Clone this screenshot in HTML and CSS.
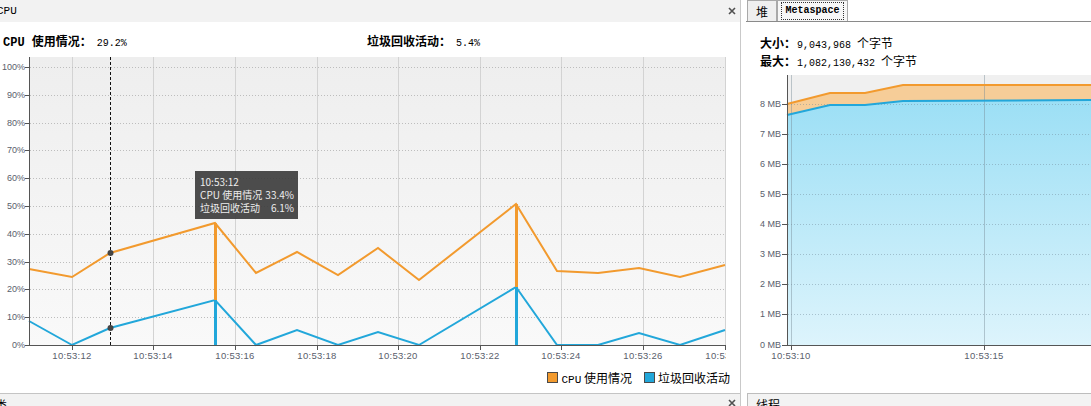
FILE: index.html
```html
<!DOCTYPE html>
<html>
<head>
<meta charset="utf-8">
<title>VisualVM</title>
<link rel="stylesheet" href="styles.css">
</head>
<body>
<div class="app">
  <section class="panel-left">
    <div class="phead">
      <span class="ptitle">CPU</span>
      <svg class="close" width="8" height="8" viewBox="0 0 8 8"><path d="M1 1L7 7M7 1L1 7" stroke="#505050" stroke-width="1.6"/></svg>
    </div>
    <div class="pbody-left">
      <div class="stats">
        <div class="stat stat-cpu"><span class="lbl">CPU 使用情况：</span><span class="val">29.2%</span></div>
        <div class="stat"><span class="lbl">垃圾回收活动：</span><span class="val">5.4%</span></div>
      </div>
      <div class="chart-left">
        <svg width="741" height="310" viewBox="0 0 741 310">
          <defs>
            <linearGradient id="gl" x1="0" y1="0" x2="0" y2="1">
              <stop offset="0" stop-color="#eeeeee"/>
              <stop offset="1" stop-color="#f9f9f9"/>
            </linearGradient>
            <clipPath id="clipL"><rect x="0" y="0" width="726" height="400"/></clipPath>
          </defs>
          <g transform="translate(0,-57)">
            <rect x="29" y="57" width="696" height="288" fill="url(#gl)"/>
            <g stroke="#d3d3d3" stroke-width="1">
              <path d="M72.5 57V345M153.5 57V345M235.5 57V345M317.5 57V345M398.5 57V345M480.5 57V345M561.5 57V345M643.5 57V345M725.5 57V345"/>
            </g>
            <g stroke="#bdbdbd" stroke-width="1" stroke-dasharray="1 2">
              <path d="M30 317.5H725M30 289.5H725M30 262.5H725M30 234.5H725M30 206.5H725M30 178.5H725M30 150.5H725M30 123.5H725M30 95.5H725M30 67.5H725"/>
            </g>
            <path d="M110.5 57V345" stroke="#111" stroke-width="1" stroke-dasharray="3 2"/>
            <g fill="none" stroke-width="2" stroke-linejoin="miter">
              <polyline stroke="#f29a2e" points="29,269 72,277 110,253 215,223 256,273 297,252 338,275 378,248 419,280 516,204 557,271 598,273 639,268 680,277 725,265"/>
              <polyline stroke="#22a7da" points="29,321 72,345 110,328 215,300 256,345 297,330 338,345 378,332 419,345 516,287 557,345 598,345 639,333 680,345 725,330"/>
            </g>
            <path d="M215.5 223V300M516.5 204V287" stroke="#f29a2e" stroke-width="3"/>
            <path d="M215.5 300V345M516.5 287V345" stroke="#22a7da" stroke-width="3"/>
            <circle cx="110.5" cy="253" r="3" fill="#444"/>
            <circle cx="110.5" cy="328" r="3" fill="#444"/>
            <g stroke="#555" stroke-width="1">
              <path d="M29.5 57V346M29 345.5H726"/>
              <path d="M25 345.5H29M25 317.5H29M25 289.5H29M25 262.5H29M25 234.5H29M25 206.5H29M25 178.5H29M25 150.5H29M25 123.5H29M25 95.5H29M25 67.5H29"/>
              <path d="M72.5 346V350M153.5 346V350M235.5 346V350M317.5 346V350M398.5 346V350M480.5 346V350M561.5 346V350M643.5 346V350M725.5 346V350"/>
            </g>
            <g class="ylab" text-anchor="end">
              <text x="25" y="348">0%</text>
              <text x="25" y="320">10%</text>
              <text x="25" y="292">20%</text>
              <text x="25" y="265">30%</text>
              <text x="25" y="237">40%</text>
              <text x="25" y="209">50%</text>
              <text x="25" y="181">60%</text>
              <text x="25" y="153">70%</text>
              <text x="25" y="126">80%</text>
              <text x="25" y="98">90%</text>
              <text x="25" y="70">100%</text>
            </g>
            <g class="xlab" text-anchor="middle" clip-path="url(#clipL)">
              <text x="72" y="359">10:53:12</text>
              <text x="153" y="359">10:53:14</text>
              <text x="235" y="359">10:53:16</text>
              <text x="317" y="359">10:53:18</text>
              <text x="398" y="359">10:53:20</text>
              <text x="480" y="359">10:53:22</text>
              <text x="561" y="359">10:53:24</text>
              <text x="643" y="359">10:53:26</text>
              <text x="725" y="359">10:53:28</text>
            </g>
          </g>
        </svg>
        <div class="tooltip">
          <div class="tt-time">10:53:12</div>
          <div class="tt-row"><span>CPU 使用情况</span><span>33.4%</span></div>
          <div class="tt-row"><span>垃圾回收活动</span><span>6.1%</span></div>
        </div>
      </div>
      <div class="legend">
        <span class="sw sw-cpu"></span><span class="ltext"><span class="mono">CPU</span> 使用情况</span>
        <span class="sw sw-gc"></span><span class="ltext">垃圾回收活动</span>
      </div>
    </div>
    <div class="phead phead-bottom">
      <span class="ptitle-cn">类</span>
      <svg class="close" width="8" height="8" viewBox="0 0 8 8"><path d="M1 1L7 7M7 1L1 7" stroke="#505050" stroke-width="1.6"/></svg>
    </div>
  </section>
  <div class="split"></div>
  <section class="panel-right">
    <div class="tabs">
      <div class="tab">堆</div>
      <div class="tab tab-active"><span class="tab-focus">Metaspace</span></div>
    </div>
    <div class="pbody-right">
      <div class="info">
        <div class="irow"><span class="lbl">大小：</span><span class="num">9,043,968</span><span class="unit">个字节</span></div>
        <div class="irow"><span class="lbl">最大：</span><span class="num">1,082,130,432</span><span class="unit">个字节</span></div>
      </div>
      <svg class="chart-right" width="345" height="297" viewBox="0 0 345 297">
        <defs>
          <linearGradient id="gb" x1="0" y1="0" x2="0" y2="1">
            <stop offset="0" stop-color="#9cdff5"/>
            <stop offset="1" stop-color="#ddf4fc"/>
          </linearGradient>
        </defs>
        <g transform="translate(-746,-70)">
          <rect x="787" y="75" width="304" height="270" fill="#f0f0f0"/>
          <polygon fill="#f6cd98" points="787,104 830,93 865,93 903,85 1091,85 1091,100 903,101 865,105 830,105 787,115"/>
          <polygon fill="url(#gb)" points="787,115 830,105 865,105 903,101 1091,100 1091,345 787,345"/>
          <g stroke="rgba(110,135,150,0.45)" stroke-width="1" stroke-dasharray="1 2">
            <path d="M788 314.5H1091M788 284.5H1091M788 254.5H1091M788 224.5H1091M788 194.5H1091M788 164.5H1091M788 134.5H1091M788 104.5H1091"/>
          </g>
          <path d="M791.5 75V345M984.5 75V345" stroke="rgba(120,140,150,0.45)" stroke-width="1"/>
          <polyline fill="none" stroke="#f29a2e" stroke-width="2" points="787,104 830,93 865,93 903,85 1091,85"/>
          <polyline fill="none" stroke="#22a7da" stroke-width="2" points="787,115 830,105 865,105 903,101 1091,100"/>
          <g stroke="#555" stroke-width="1">
            <path d="M787.5 75V346M787 345.5H1091"/>
            <path d="M782 345.5H787M782 314.5H787M782 284.5H787M782 254.5H787M782 224.5H787M782 194.5H787M782 164.5H787M782 134.5H787M782 104.5H787"/>
            <path d="M791.5 346V350M984.5 346V350"/>
          </g>
          <g class="ylab" text-anchor="end">
            <text x="781" y="348">0 MB</text>
            <text x="781" y="317">1 MB</text>
            <text x="781" y="287">2 MB</text>
            <text x="781" y="257">3 MB</text>
            <text x="781" y="227">4 MB</text>
            <text x="781" y="197">5 MB</text>
            <text x="781" y="167">6 MB</text>
            <text x="781" y="137">7 MB</text>
            <text x="781" y="107">8 MB</text>
          </g>
          <g class="xlab" text-anchor="middle">
            <text x="791" y="359">10:53:10</text>
            <text x="984" y="359">10:53:15</text>
          </g>
        </g>
      </svg>
    </div>
    <div class="bottom-right">
      <div class="brbox"><span>线程</span></div>
    </div>
  </section>
</div>
</body>
</html>
```

FILE: styles.css
```css
* {
  box-sizing: border-box;
  margin: 0;
  padding: 0;
}

html, body {
  width: 1091px;
  height: 406px;
  overflow: hidden;
  background: #ffffff;
}

body {
  font-family: "Noto Sans CJK SC", "Liberation Sans", sans-serif;
  font-size: 12px;
  color: #000;
}

.app {
  display: flex;
  width: 1091px;
  height: 406px;
}

/* ---------- left panel ---------- */
.panel-left {
  width: 741px;
  flex: none;
  border-right: 1px solid #c9c9c9;
  display: flex;
  flex-direction: column;
  overflow: hidden;
}

.phead {
  height: 22px;
  flex: none;
  background: #f2f2f2;
  display: flex;
  align-items: center;
  justify-content: space-between;
  padding-right: 4px;
}

.ptitle {
  font-family: "Liberation Mono", monospace;
  font-size: 11px;
  margin-left: -3px;
  line-height: 14px;
}

.close {
  display: block;
}

.pbody-left {
  height: 371px;
  flex: none;
  display: flex;
  flex-direction: column;
}

.stats {
  height: 35px;
  flex: none;
  padding-top: 7px;
  padding-left: 3px;
  display: flex;
  line-height: 28px;
}

.stat {
  display: flex;
  align-items: baseline;
}

.stat-cpu {
  width: 364px;
}

.lbl {
  font-family: "Liberation Mono", "Noto Sans CJK SC", monospace;
  font-weight: bold;
  font-size: 12px;
}

.val {
  font-family: "Liberation Mono", monospace;
  font-size: 10px;
  margin-left: 5px;
}

.chart-left {
  position: relative;
  height: 310px;
  flex: none;
}

.chart-left svg,
.chart-right {
  display: block;
}

.ylab text,
.xlab text {
  font-family: "Liberation Sans", sans-serif;
  font-size: 9px;
  fill: #59606c;
}

.xlab text {
  font-size: 9.5px;
  letter-spacing: 0.3px;
}

.tooltip {
  position: absolute;
  left: 195px;
  top: 114px;
  width: 103px;
  height: 48px;
  padding: 4px 4px 0 5px;
  background: rgba(58, 58, 58, 0.9);
  color: #ececec;
  font-family: "Noto Sans CJK SC", sans-serif;
  font-size: 10px;
  line-height: 13px;
}

.tt-row {
  display: flex;
  justify-content: space-between;
}

.legend {
  height: 20px;
  flex: none;
  display: flex;
  align-items: center;
  justify-content: flex-end;
  padding-right: 10px;
  font-size: 12px;
}

.sw {
  width: 11px;
  height: 11px;
  border: 1px solid #4a4a4a;
  margin-right: 3px;
}

.sw-cpu {
  background: #f29a2e;
}

.sw-gc {
  background: #22a7da;
  margin-left: 12px;
}

.mono {
  font-family: "Liberation Mono", monospace;
  font-size: 11px;
}

.phead-bottom {
  height: 13px;
  border-top: 1px solid #c4c4c4;
  align-items: flex-start;
  padding-top: 5px;
  margin-top: auto;
}

.ptitle-cn {
  font-size: 12px;
  line-height: 12px;
  margin-left: -5px;
}

.split {
  width: 5px;
  flex: none;
}

/* ---------- right panel ---------- */
.panel-right {
  flex: 1;
  min-width: 0;
  display: flex;
  flex-direction: column;
  overflow: hidden;
}

.tabs {
  height: 22px;
  flex: none;
  display: flex;
  align-items: flex-end;
  padding-left: 1px;
  border-bottom: 1px solid #8a8a8a;
}

.tab {
  height: 21px;
  width: 30px;
  border: 1px solid #a9a9a9;
  border-bottom: none;
  background: #efefef;
  display: flex;
  align-items: center;
  justify-content: center;
  font-size: 12px;
}

.tab-active {
  width: 71px;
  background: #f7f7f7;
}

.tab-focus {
  font-family: "Liberation Mono", monospace;
  font-weight: bold;
  font-size: 10px;
  border: 1px dotted #333;
  padding: 1px 3px;
  line-height: 14px;
}

.pbody-right {
  height: 371px;
  flex: none;
  display: flex;
  flex-direction: column;
}

.info {
  height: 48px;
  flex: none;
  padding-top: 12px;
  padding-left: 14px;
}

.irow {
  display: flex;
  align-items: baseline;
  height: 18px;
  line-height: 18px;
}

.num {
  font-family: "Liberation Mono", monospace;
  font-size: 10px;
  margin-left: 1px;
}

.unit {
  margin-left: 6px;
  font-size: 12px;
}

.bottom-right {
  flex: 1;
  display: flex;
}

.brbox {
  flex: 1;
  margin-left: 1px;
  border-left: 1px solid #bdbdbd;
  border-top: 1px solid #bdbdbd;
  background: #f3f3f3;
  padding-left: 8px;
  padding-top: 5px;
  font-size: 12px;
  line-height: 12px;
}
```
